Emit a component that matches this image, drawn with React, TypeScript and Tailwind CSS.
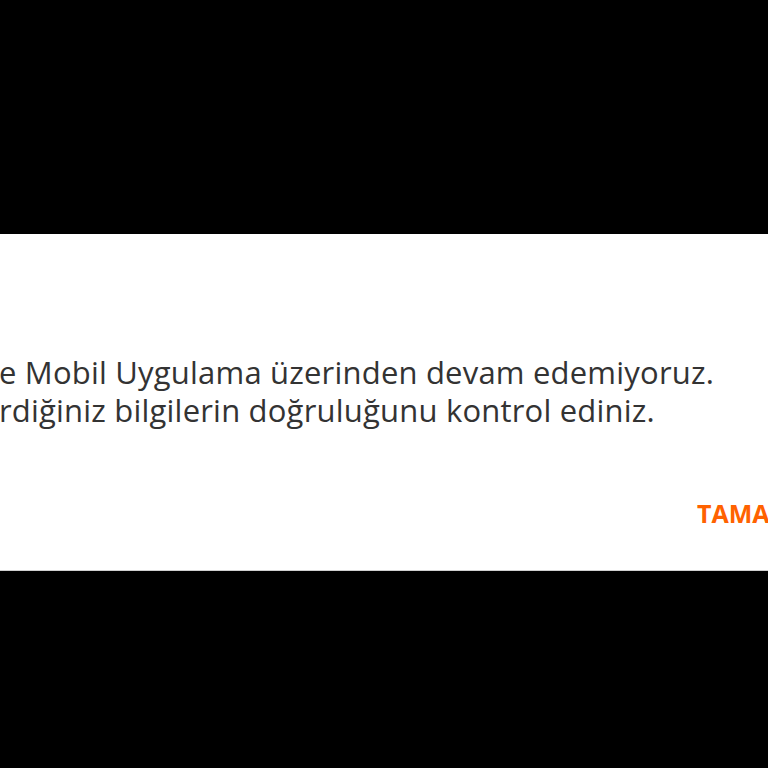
export default function App() {
  return (
    <div className="w-[768px] h-[768px] bg-black flex flex-col overflow-hidden">
      <div className="h-[234px] shrink-0" />
      <div
        className="h-[337px] shrink-0 bg-white border-b border-[#cfcfcf] flex flex-col overflow-hidden text-[#333333]"
        style={{ fontFamily: "'Open Sans', Lato, sans-serif" }}
      >
        <div className="pt-[119px] text-[31px] leading-[38px] tracking-[0.2px] whitespace-nowrap">
          <p className="-ml-[1px]">e Mobil Uygulama üzerinden devam edemiyoruz.</p>
          <p className="-ml-[1px]">rdiğiniz bilgilerin doğruluğunu kontrol ediniz.</p>
        </div>
        <div className="flex justify-start pl-[697px] pt-[72px]">
          <span className="text-[25px] font-bold leading-none text-[#ff6200] whitespace-nowrap">TAMAM</span>
        </div>
      </div>
    </div>
  );
}
